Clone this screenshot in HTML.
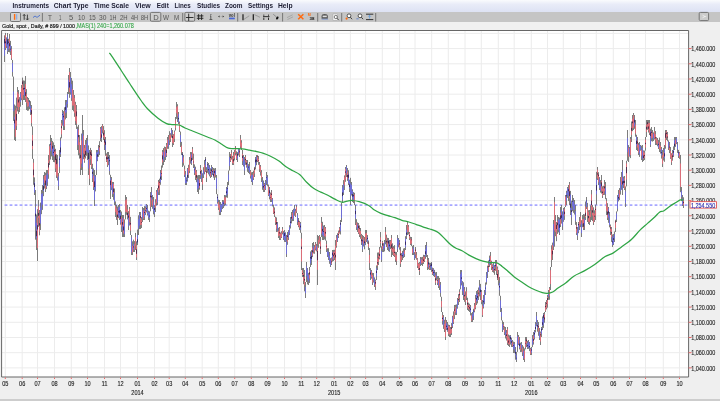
<!DOCTYPE html>
<html><head><meta charset="utf-8"><style>
*{margin:0;padding:0}
html,body{width:720px;height:401px;overflow:hidden;background:#efefef;font-family:"Liberation Sans",sans-serif}
#menu{position:absolute;left:0;top:0;width:720px;height:12px;background:linear-gradient(#fafbfd 0%,#e9ecf8 35%,#dde2f4 100%)}
#menu span{position:absolute;top:1px;font-size:8px;font-weight:bold;color:#1a1a2a;white-space:nowrap;line-height:10px}
#tool{position:absolute;left:0;top:12px;width:720px;height:10px;background:#c5c5c5}
#hdr{position:absolute;left:0;top:22px;width:720px;height:8px;background:#f0f0f0}
#hdr span{position:absolute;top:0;font-size:6.5px;line-height:8px;white-space:nowrap}
#bot{position:absolute;left:0;top:398.8px;width:720px;height:3px;background:#cdcdcd}
svg{position:absolute;left:0;top:0;will-change:transform}
.mn{font-size:8px;font-weight:bold;fill:#1c1c30}
.hd{font-size:6.2px;fill:#151515;stroke:#151515;stroke-width:0.18}
.tb{font-size:7.6px;fill:#555}
.yl{font-size:6.6px;fill:#222;stroke:#222;stroke-width:0.12}
.xl{font-size:6.6px;fill:#222;stroke:#222;stroke-width:0.12}
</style></head><body>
<div id="menu"></div>
<div id="tool"></div>
<div id="hdr"></div>
<div id="bot"></div>
<svg width="720" height="401" viewBox="0 0 720 401">
<text x="12.5" y="8.4" class="mn" textLength="36.5" lengthAdjust="spacingAndGlyphs">Instruments</text><text x="53.75" y="8.4" class="mn" textLength="34.75" lengthAdjust="spacingAndGlyphs">Chart Type</text><text x="93.75" y="8.4" class="mn" textLength="35.25" lengthAdjust="spacingAndGlyphs">Time Scale</text><text x="135" y="8.4" class="mn" textLength="15.75" lengthAdjust="spacingAndGlyphs">View</text><text x="156.75" y="8.4" class="mn" textLength="12" lengthAdjust="spacingAndGlyphs">Edit</text><text x="174.5" y="8.4" class="mn" textLength="16.25" lengthAdjust="spacingAndGlyphs">Lines</text><text x="197" y="8.4" class="mn" textLength="23" lengthAdjust="spacingAndGlyphs">Studies</text><text x="225" y="8.4" class="mn" textLength="17.5" lengthAdjust="spacingAndGlyphs">Zoom</text><text x="248" y="8.4" class="mn" textLength="25" lengthAdjust="spacingAndGlyphs">Settings</text><text x="278" y="8.4" class="mn" textLength="14.5" lengthAdjust="spacingAndGlyphs">Help</text><text x="2" y="27.9" class="hd" textLength="73" lengthAdjust="spacingAndGlyphs">Gold, spot , Daily, # 899 / 1000</text><text x="75.4" y="27.9" class="hd" style="fill:#30a444;stroke:#30a444;stroke-width:0.1;font-size:6.3px" textLength="58.4" lengthAdjust="spacingAndGlyphs">,MAS(1) 240=1,260.078</text><rect x="10.5" y="12.5" width="10" height="9" rx="1.2" fill="#d2d2d2" stroke="#6a6a6a" stroke-width="0.9"/><rect x="13.9" y="14" width="1.4" height="5.8" fill="#ff6a10"/><rect x="16" y="14.2" width="1.3" height="5.4" fill="#8ab0e8"/><path d="M24.2 19.8V14.6M23 15.8L24.2 14.4L25.4 15.8M27.4 14.6V19.8M26.2 18.6L27.4 20L28.6 18.6" stroke="#303030" stroke-width="0.9" fill="none"/><path d="M33 17.6L35 16L37 17.4L40 15.2" stroke="#4a70d0" stroke-width="0.9" fill="none"/><path d="M42.4 13V21.5" stroke="#6e6e6e" stroke-width="0.9"/><path d="M182.7 13V21.5" stroke="#6e6e6e" stroke-width="0.9"/><path d="M237.7 13V21.5" stroke="#6e6e6e" stroke-width="0.9"/><path d="M282.6 13V21.5" stroke="#6e6e6e" stroke-width="0.9"/><path d="M317.7 13V21.5" stroke="#6e6e6e" stroke-width="0.9"/><path d="M341.7 13V21.5" stroke="#6e6e6e" stroke-width="0.9"/><path d="M375.7 13V21.5" stroke="#6e6e6e" stroke-width="0.9"/><text x="47.9" y="19.8" class="tb" textLength="3.9" lengthAdjust="spacingAndGlyphs">T</text><text x="58.9" y="19.8" class="tb" textLength="2.4" lengthAdjust="spacingAndGlyphs">1</text><text x="69.0" y="19.8" class="tb" textLength="4.2" lengthAdjust="spacingAndGlyphs">5</text><text x="78.0" y="19.8" class="tb" textLength="7.0" lengthAdjust="spacingAndGlyphs">10</text><text x="88.9" y="19.8" class="tb" textLength="6.9" lengthAdjust="spacingAndGlyphs">15</text><text x="99.0" y="19.8" class="tb" textLength="7.4" lengthAdjust="spacingAndGlyphs">30</text><text x="109.4" y="19.8" class="tb" textLength="7.0" lengthAdjust="spacingAndGlyphs">1H</text><text x="119.9" y="19.8" class="tb" textLength="7.6" lengthAdjust="spacingAndGlyphs">2H</text><text x="131" y="19.8" class="tb" textLength="7.0" lengthAdjust="spacingAndGlyphs">4H</text><text x="140.7" y="19.8" class="tb" textLength="7.6" lengthAdjust="spacingAndGlyphs">8H</text><text x="163" y="19.8" class="tb" textLength="6.0" lengthAdjust="spacingAndGlyphs">W</text><text x="174" y="19.8" class="tb" textLength="5.2" lengthAdjust="spacingAndGlyphs">M</text><rect x="150.4" y="12.4" width="10.4" height="8.8" rx="1.2" fill="#cfcfcf" stroke="#6a6a6a" stroke-width="0.9"/><text x="153.3" y="19.8" class="tb">D</text><rect x="184.9" y="12.4" width="9.8" height="8.8" rx="1.2" fill="#cfcfcf" stroke="#6a6a6a" stroke-width="0.9"/><path d="M186 17.5H193.5M188.7 13.6V21" stroke="#202020" stroke-width="0.9"/><path d="M198.6 14.2V20M201.6 14.2V20M196.8 15.9H203.4M196.8 18.3H203.4" stroke="#202020" stroke-width="0.9"/><path d="M210.8 15.9V19.1M209.5 19.5H212.3M210 15.9H210.9" stroke="#404040" stroke-width="0.8"/><circle cx="210.9" cy="14.5" r="0.55" fill="#404040"/><path d="M218 16.6L219.6 15.6V17.6ZM224.2 16.6L222.6 15.6V17.6Z" fill="#333"/><circle cx="221.1" cy="16.6" r="0.4" fill="#777"/><text x="228.8" y="16.9" style="font-size:4.6px;fill:#333;font-weight:bold" textLength="6" lengthAdjust="spacingAndGlyphs">vol</text><rect x="229" y="17.6" width="5.8" height="1.7" fill="#4a68d8"/><path d="M243 14.2V20.2" stroke="#1a1a1a" stroke-width="1.2"/><path d="M244 19.3L249.2 15.8" stroke="#888" stroke-width="0.7"/><path d="M253.3 14.2V20.2" stroke="#1a1a1a" stroke-width="1.2"/><path d="M254.4 14.6L260 17.3" stroke="#888" stroke-width="0.7"/><path d="M263 16.6H269.5M263.8 14.6V15.8M268.5 14.6V15.8M263.8 17.6V20M268.5 17.6V20" stroke="#333" stroke-width="1"/><path d="M273.2 14.2L276.5 17" stroke="#777" stroke-width="0.7"/><ellipse cx="277.3" cy="18" rx="1.1" ry="1.6" fill="#111" transform="rotate(30 277.3 18)"/><path d="M287 17.6L292.6 14.8M287.4 19.6L293 16.8" stroke="#a0a0a0" stroke-width="0.8"/><path d="M298.2 14.2L303.4 19.2M303.4 14.2L298.2 19.2" stroke="#ff6a10" stroke-width="1.5"/><text x="307.8" y="16.2" style="font-size:3.6px;fill:#ff6a10;font-weight:bold">M</text><text x="309.6" y="20.2" style="font-size:4.4px;fill:#111;font-weight:bold">38</text><path d="M321.6 18.8V16.2Q321.6 14 324.6 14Q327.8 14 327.8 16.2V18.8Z" fill="#555"/><rect x="322.6" y="15.6" width="4.2" height="1.6" fill="#ddd"/><path d="M321.6 19.2H328" stroke="#6a8ad0" stroke-width="0.7"/><rect x="333" y="14" width="4.4" height="6.2" fill="#f4f4f4" stroke="#999" stroke-width="0.4"/><circle cx="335.8" cy="17" r="1.6" fill="#fff" stroke="#444" stroke-width="0.7"/><path d="M337 18.2L338.8 20.2" stroke="#333" stroke-width="0.8"/><circle cx="349" cy="15.8" r="1.9" fill="#fff" stroke="#333" stroke-width="0.8"/><path d="M350.3 17.2L352.1 19.2" stroke="#333" stroke-width="0.9"/><circle cx="346.6" cy="18.6" r="1.1" fill="#ff6a10"/><circle cx="360" cy="15.8" r="1.9" fill="#fff" stroke="#333" stroke-width="0.8"/><path d="M361.3 17.2L363.1 19.2" stroke="#333" stroke-width="0.9"/><path d="M356.4 18.8H358.6" stroke="#5a80d0" stroke-width="0.9"/><path d="M366 14.2H373.3M366 19.6H373.3" stroke="#333" stroke-width="1"/><path d="M369.6 15.4V18.6M368.4 16.6L369.6 15.3L370.8 16.6" stroke="#5a9ae0" stroke-width="0.8" fill="none"/><rect x="699.2" y="12.4" width="9.4" height="8.2" rx="1.2" fill="#cbcbcb" stroke="#6a6a6a" stroke-width="0.9"/><path d="M702.5 15.2L705 16.5L702.5 17.8" stroke="#f0f0f0" stroke-width="0.8" fill="none"/><path d="M704.2 16.5H706.2" stroke="#eee" stroke-width="0.8"/><rect x="1.6" y="30.5" width="687.0" height="346.5" fill="#fff"/><path d="M5.3 30.5V377.0M22.2 30.5V377.0M37.5 30.5V377.0M54.5 30.5V377.0M71.3 30.5V377.0M87.5 30.5V377.0M104.5 30.5V377.0M120.5 30.5V377.0M137.5 30.5V377.0M154.5 30.5V377.0M169.2 30.5V377.0M185.3 30.5V377.0M202.2 30.5V377.0M218.3 30.5V377.0M234.7 30.5V377.0M251.3 30.5V377.0M267.5 30.5V377.0M284.5 30.5V377.0M301.3 30.5V377.0M316.7 30.5V377.0M334.2 30.5V377.0M350.4 30.5V377.0M365.6 30.5V377.0M382.3 30.5V377.0M399.6 30.5V377.0M415.0 30.5V377.0M431.7 30.5V377.0M448.3 30.5V377.0M465.0 30.5V377.0M481.3 30.5V377.0M498.3 30.5V377.0M514.2 30.5V377.0M531.3 30.5V377.0M547.5 30.5V377.0M563.3 30.5V377.0M580.5 30.5V377.0M596.3 30.5V377.0M613.3 30.5V377.0M629.5 30.5V377.0M645.5 30.5V377.0M663.3 30.5V377.0M679.5 30.5V377.0M1.6 367.9H688.6M1.6 352.7H688.6M1.6 337.5H688.6M1.6 322.3H688.6M1.6 307.1H688.6M1.6 291.9H688.6M1.6 276.7H688.6M1.6 261.5H688.6M1.6 246.3H688.6M1.6 231.0H688.6M1.6 215.8H688.6M1.6 200.6H688.6M1.6 185.4H688.6M1.6 170.2H688.6M1.6 155.0H688.6M1.6 139.8H688.6M1.6 124.6H688.6M1.6 109.4H688.6M1.6 94.2H688.6M1.6 79.0H688.6M1.6 63.8H688.6M1.6 48.6H688.6M1.6 33.4H688.6" stroke="#ececec" stroke-width="1" fill="none"/><path d="M4.6 205.2H688.6" stroke="#a8a8ff" stroke-width="1.8" stroke-dasharray="2.8 2.2" fill="none"/><path d="M4.5 35.3V62.0M5.5 33.0V50.0M6.5 37.4V48.0M7.5 33.0V54.0M8.5 38.8V52.0M9.5 34.0V52.3M10.5 40.9V55.0M11.5 46.1V60.0M12.5 60.0V76.6M13.5 76.6V120.9M14.5 104.5V140.0M15.5 105.7V141.0M16.5 97.6V130.0M17.5 87.0V111.4M18.5 90.0V113.9M19.5 97.1V112.0M20.5 92.0V106.7M21.5 85.0V100.2M22.5 77.6V105.0M23.5 80.4V100.0M24.5 80.7V100.0M25.5 76.0V102.0M26.5 89.1V110.0M27.5 97.0V110.8M28.5 98.0V110.6M29.5 100.0V109.1M30.5 101.2V115.0M31.5 105.0V126.4M32.5 126.4V158.9M33.5 158.9V184.8M34.5 177.4V195.0M35.5 190.0V239.7M36.5 214.6V250.0M37.5 209.2V261.0M38.5 200.0V226.8M39.5 210.0V235.3M40.5 202.6V230.0M41.5 190.0V214.2M42.5 185.0V209.9M43.5 175.0V196.2M44.5 172.0V188.5M45.5 172.7V192.0M46.5 170.0V189.1M47.5 170.0V185.9M48.5 155.0V178.8M49.5 144.2V165.0M50.5 135.0V159.5M51.5 138.0V156.4M52.5 140.9V160.0M53.5 142.4V162.0M54.5 145.0V162.3M55.5 148.8V172.0M56.5 154.2V178.0M57.5 155.0V180.5M58.5 173.0V190.0M59.5 150.0V173.0M60.5 137.4V157.0M61.5 120.0V138.3M62.5 110.0V125.6M63.5 111.1V130.0M64.5 107.3V130.0M65.5 100.0V119.4M66.5 100.0V118.0M67.5 92.0V107.6M68.5 75.0V94.0M69.5 68.0V97.8M70.5 72.0V94.7M71.5 78.0V100.9M72.5 80.7V110.0M73.5 90.0V111.3M74.5 95.0V116.8M75.5 101.8V125.0M76.5 105.0V128.9M77.5 126.7V150.0M78.5 125.0V155.3M79.5 135.0V158.6M80.5 145.0V175.0M81.5 133.6V170.0M82.5 115.0V175.0M83.5 130.0V159.2M84.5 145.0V162.8M85.5 140.0V158.5M86.5 138.0V155.8M87.5 135.0V160.0M88.5 145.4V175.0M89.5 150.0V185.0M90.5 147.9V165.0M91.5 150.0V169.0M92.5 163.8V182.0M93.5 168.4V190.0M94.5 170.0V206.0M95.5 175.0V191.4M96.5 150.0V175.0M97.5 150.0V161.2M98.5 145.0V156.8M99.5 141.2V155.0M100.5 127.0V141.2M101.5 126.1V142.0M102.5 124.0V133.4M103.5 126.1V140.0M104.5 130.2V150.0M105.5 137.0V155.8M106.5 153.4V162.0M107.5 152.0V167.0M108.5 152.0V165.2M109.5 155.0V174.8M110.5 174.8V199.0M111.5 177.0V190.1M112.5 181.9V197.0M113.5 182.0V199.8M114.5 188.5V205.0M115.5 201.4V217.0M116.5 205.0V219.9M117.5 206.5V225.0M118.5 205.0V218.1M119.5 204.0V220.0M120.5 210.0V224.7M121.5 211.5V232.0M122.5 215.0V237.0M123.5 215.0V237.0M124.5 219.4V237.0M125.5 195.0V219.4M126.5 197.0V214.8M127.5 205.0V219.4M128.5 211.1V230.0M129.5 207.0V225.5M130.5 216.9V235.0M131.5 235.0V255.0M132.5 241.3V255.0M133.5 239.7V252.0M134.5 241.1V252.0M135.5 232.9V250.0M136.5 241.3V260.0M137.5 229.6V245.0M138.5 215.3V235.0M139.5 212.0V229.1M140.5 212.0V229.0M141.5 217.0V228.0M142.5 207.0V222.0M143.5 208.0V220.0M144.5 206.1V220.0M145.5 206.3V215.0M146.5 204.0V212.4M147.5 205.0V215.5M148.5 210.7V220.0M149.5 211.3V222.0M150.5 192.0V211.3M151.5 187.0V207.0M152.5 195.0V208.8M153.5 197.0V214.4M154.5 205.1V217.0M155.5 199.2V212.0M156.5 190.0V205.4M157.5 188.1V205.0M158.5 180.0V195.0M159.5 178.7V195.0M160.5 170.0V184.8M161.5 165.5V180.0M162.5 150.0V167.6M163.5 148.1V165.0M164.5 146.6V162.0M165.5 147.0V160.0M166.5 143.0V157.0M167.5 137.0V148.8M168.5 135.0V148.8M169.5 131.2V145.0M170.5 133.2V142.0M171.5 128.0V137.6M172.5 130.0V147.0M173.5 134.1V145.0M174.5 130.5V142.0M175.5 117.0V130.5M176.5 102.0V118.9M177.5 104.2V122.0M178.5 112.0V124.0M179.5 121.5V132.0M180.5 131.6V147.0M181.5 141.9V155.0M182.5 152.0V167.0M183.5 155.0V165.6M184.5 165.6V177.0M185.5 171.0V185.0M186.5 177.4V185.0M187.5 168.0V181.6M188.5 164.8V178.0M189.5 157.0V173.1M190.5 152.0V163.7M191.5 152.1V165.0M192.5 147.0V160.0M193.5 153.6V168.0M194.5 164.4V175.0M195.5 166.7V180.0M196.5 170.0V182.2M197.5 175.4V192.0M198.5 175.0V194.0M199.5 175.0V189.7M200.5 165.0V178.9M201.5 169.9V182.0M202.5 173.3V190.0M203.5 167.2V178.0M204.5 160.0V174.3M205.5 157.0V172.0M206.5 167.1V182.0M207.5 162.0V172.8M208.5 163.0V174.4M209.5 165.0V176.3M210.5 168.3V178.0M211.5 165.0V177.0M212.5 167.0V175.0M213.5 168.0V177.6M214.5 168.4V180.0M215.5 168.0V177.5M216.5 175.0V194.1M217.5 194.1V203.7M218.5 199.7V210.0M219.5 200.0V215.0M220.5 202.0V215.0M221.5 203.9V212.0M222.5 200.0V209.0M223.5 200.2V208.0M224.5 195.0V206.2M225.5 195.2V205.0M226.5 187.0V197.4M227.5 182.0V197.8M228.5 170.5V185.0M229.5 152.0V170.5M230.5 154.0V162.0M231.5 150.0V159.6M232.5 155.9V165.0M233.5 152.0V165.0M234.5 150.0V160.4M235.5 146.0V155.4M236.5 151.3V160.0M237.5 152.1V162.0M238.5 148.0V155.4M239.5 148.4V157.0M240.5 135.0V148.4M241.5 140.2V150.0M242.5 150.0V165.0M243.5 155.0V166.5M244.5 157.0V175.0M245.5 155.0V164.8M246.5 160.0V167.6M247.5 160.0V171.8M248.5 164.1V173.0M249.5 162.0V174.2M250.5 170.0V178.6M251.5 172.3V182.0M252.5 172.0V185.0M253.5 170.6V180.0M254.5 166.9V177.0M255.5 157.0V169.4M256.5 155.0V165.2M257.5 155.0V162.1M258.5 156.0V164.9M259.5 162.0V172.0M260.5 165.0V175.6M261.5 170.1V182.0M262.5 177.0V189.8M263.5 180.5V192.0M264.5 183.0V192.0M265.5 180.0V190.0M266.5 172.0V185.0M267.5 175.0V186.2M268.5 184.6V196.0M269.5 187.0V199.4M270.5 192.5V202.0M271.5 190.0V202.0M272.5 198.0V206.4M273.5 204.6V214.0M274.5 207.4V217.0M275.5 216.7V225.0M276.5 217.4V232.0M277.5 222.0V231.8M278.5 227.8V238.0M279.5 227.0V240.0M280.5 232.5V240.0M281.5 231.2V238.0M282.5 227.0V234.4M283.5 231.1V240.0M284.5 230.0V241.9M285.5 232.3V242.0M286.5 235.0V257.0M287.5 232.0V244.8M288.5 230.1V240.0M289.5 225.2V235.0M290.5 217.0V228.5M291.5 212.0V223.4M292.5 210.0V221.1M293.5 208.8V221.0M294.5 205.0V215.8M295.5 208.9V217.0M296.5 205.0V213.1M297.5 213.1V225.0M298.5 218.0V227.2M299.5 220.9V230.0M300.5 222.0V232.8M301.5 232.8V270.0M302.5 268.1V277.0M303.5 268.0V284.2M304.5 270.0V291.3M305.5 282.0V298.0M306.5 262.0V282.0M307.5 268.0V284.4M308.5 272.9V285.0M309.5 267.0V283.0M310.5 251.4V267.0M311.5 250.1V265.0M312.5 243.0V257.1M313.5 242.0V253.5M314.5 245.0V253.8M315.5 242.0V250.4M316.5 244.0V251.4M317.5 235.0V285.0M318.5 236.0V247.8M319.5 235.0V243.8M320.5 237.0V254.0M321.5 217.0V237.0M322.5 221.8V240.0M323.5 225.5V240.0M324.5 225.0V239.5M325.5 227.0V240.6M326.5 240.6V252.0M327.5 248.2V257.0M328.5 248.2V260.0M329.5 252.0V263.8M330.5 258.2V267.0M331.5 257.4V265.0M332.5 250.0V261.6M333.5 249.9V261.0M334.5 249.8V260.0M335.5 240.0V270.0M336.5 235.0V247.7M337.5 233.2V242.0M338.5 230.6V238.0M339.5 227.0V233.6M340.5 220.0V234.5M341.5 202.8V222.0M342.5 185.0V202.8M343.5 180.1V195.0M344.5 175.4V190.0M345.5 167.0V181.8M346.5 165.0V177.0M347.5 168.0V180.9M348.5 170.2V185.0M349.5 179.7V192.0M350.5 177.8V205.0M351.5 182.0V195.5M352.5 189.3V202.0M353.5 192.1V203.0M354.5 192.8V205.0M355.5 205.0V225.0M356.5 219.2V230.0M357.5 222.4V232.0M358.5 223.0V234.0M359.5 225.4V237.0M360.5 228.0V238.8M361.5 233.9V245.0M362.5 235.0V252.0M363.5 236.0V246.5M364.5 237.0V249.3M365.5 230.0V245.0M366.5 230.0V242.0M367.5 235.0V243.7M368.5 240.5V250.0M369.5 248.1V270.0M370.5 268.1V280.0M371.5 270.0V278.7M372.5 272.8V285.0M373.5 273.0V282.6M374.5 277.4V287.0M375.5 279.5V290.0M376.5 265.4V280.0M377.5 252.6V270.0M378.5 252.4V265.0M379.5 247.0V259.4M380.5 232.0V247.5M381.5 246.3V262.0M382.5 240.9V252.0M383.5 243.2V252.0M384.5 240.0V251.4M385.5 227.0V244.3M386.5 234.7V247.0M387.5 237.8V250.0M388.5 238.0V251.2M389.5 240.0V251.9M390.5 240.0V249.1M391.5 235.0V257.0M392.5 243.3V255.0M393.5 246.1V256.0M394.5 245.1V257.0M395.5 251.8V262.0M396.5 252.0V265.0M397.5 235.0V252.0M398.5 238.0V247.3M399.5 240.0V249.7M400.5 247.0V267.0M401.5 253.1V262.0M402.5 250.9V260.0M403.5 248.5V258.0M404.5 248.1V257.0M405.5 236.2V250.0M406.5 225.0V239.1M407.5 222.0V235.0M408.5 225.0V234.4M409.5 232.0V240.0M410.5 236.8V245.0M411.5 237.0V246.1M412.5 245.8V255.0M413.5 245.0V255.0M414.5 252.1V260.0M415.5 247.0V258.2M416.5 252.0V259.7M417.5 258.1V268.0M418.5 262.8V270.0M419.5 262.0V275.0M420.5 257.0V266.0M421.5 257.2V265.0M422.5 256.9V266.0M423.5 254.8V264.0M424.5 255.0V262.0M425.5 245.0V258.8M426.5 242.0V257.0M427.5 255.0V270.0M428.5 258.0V269.3M429.5 262.7V270.0M430.5 262.8V270.0M431.5 262.0V271.9M432.5 267.6V275.0M433.5 268.2V276.0M434.5 269.9V277.0M435.5 272.3V285.0M436.5 272.0V280.4M437.5 276.0V285.0M438.5 276.0V288.0M439.5 277.9V290.0M440.5 282.0V296.8M441.5 296.8V312.0M442.5 312.0V324.6M443.5 315.0V328.9M444.5 319.8V332.0M445.5 317.0V340.0M446.5 320.0V330.1M447.5 322.0V331.8M448.5 324.6V336.0M449.5 325.0V337.0M450.5 327.0V337.0M451.5 323.1V335.0M452.5 315.8V328.0M453.5 311.4V324.0M454.5 305.0V319.1M455.5 304.8V315.0M456.5 304.4V315.0M457.5 298.0V308.7M458.5 294.1V305.0M459.5 289.3V302.0M460.5 270.0V289.3M461.5 270.0V285.4M462.5 281.1V295.0M463.5 282.3V300.0M464.5 287.0V301.8M465.5 291.4V305.0M466.5 287.2V300.0M467.5 297.8V310.0M468.5 302.6V311.0M469.5 303.7V312.0M470.5 305.0V315.4M471.5 313.1V322.0M472.5 312.0V322.0M473.5 308.8V320.0M474.5 303.0V312.3M475.5 295.0V309.3M476.5 291.0V305.0M477.5 290.0V303.4M478.5 287.5V300.0M479.5 280.0V296.4M480.5 283.9V300.0M481.5 290.0V304.2M482.5 300.0V317.0M483.5 295.0V308.5M484.5 290.0V304.2M485.5 282.5V295.0M486.5 272.0V284.5M487.5 265.7V278.0M488.5 260.5V272.0M489.5 255.6V267.0M490.5 252.0V265.0M491.5 260.7V270.0M492.5 264.3V272.0M493.5 263.0V272.7M494.5 265.0V274.8M495.5 260.0V270.8M496.5 260.0V275.0M497.5 266.5V280.0M498.5 270.0V285.4M499.5 277.0V295.8M500.5 295.8V312.0M501.5 308.0V320.4M502.5 320.4V332.0M503.5 322.0V329.9M504.5 326.4V335.0M505.5 327.0V338.5M506.5 330.0V340.5M507.5 327.0V345.0M508.5 334.5V346.0M509.5 335.3V347.0M510.5 335.0V344.6M511.5 337.7V347.0M512.5 340.0V347.0M513.5 341.6V353.0M514.5 342.0V353.1M515.5 347.0V359.7M516.5 351.9V362.0M517.5 332.0V351.9M518.5 335.0V345.1M519.5 337.0V349.4M520.5 342.7V352.0M521.5 342.0V351.9M522.5 345.0V356.0M523.5 346.6V360.0M524.5 348.4V362.0M525.5 337.0V349.3M526.5 337.0V347.0M527.5 340.8V349.0M528.5 340.0V348.8M529.5 342.0V351.1M530.5 347.8V355.0M531.5 347.0V355.0M532.5 335.0V347.1M533.5 332.0V344.6M534.5 330.0V339.6M535.5 322.0V332.4M536.5 312.0V326.3M537.5 320.0V331.7M538.5 322.0V335.8M539.5 328.0V340.0M540.5 331.5V345.0M541.5 327.0V337.0M542.5 316.5V330.0M543.5 313.0V327.9M544.5 312.0V322.7M545.5 302.0V312.0M546.5 300.0V309.4M547.5 295.0V307.7M548.5 290.0V299.9M549.5 287.0V299.8M550.5 267.0V290.0M551.5 245.3V267.0M552.5 242.6V260.0M553.5 220.0V250.0M554.5 197.0V246.7M555.5 215.0V236.2M556.5 222.0V241.2M557.5 215.0V233.9M558.5 217.0V232.4M559.5 217.6V235.0M560.5 207.0V227.0M561.5 205.0V223.6M562.5 211.4V230.0M563.5 208.0V221.8M564.5 207.0V219.9M565.5 195.0V207.0M566.5 190.8V205.0M567.5 187.0V198.0M568.5 185.0V201.1M569.5 182.0V205.0M570.5 190.9V215.0M571.5 200.7V225.0M572.5 195.0V211.2M573.5 198.0V212.8M574.5 200.0V214.5M575.5 205.0V224.8M576.5 222.1V235.0M577.5 227.0V240.0M578.5 222.0V233.2M579.5 217.0V230.0M580.5 212.0V227.1M581.5 220.2V237.0M582.5 215.0V227.2M583.5 214.1V230.0M584.5 214.4V230.0M585.5 201.5V220.0M586.5 197.0V209.0M587.5 202.9V222.0M588.5 210.2V224.0M589.5 210.0V225.0M590.5 205.5V222.0M591.5 190.0V220.0M592.5 205.0V221.1M593.5 207.3V225.0M594.5 210.3V222.0M595.5 204.8V220.0M596.5 171.9V204.8M597.5 167.0V180.0M598.5 172.2V185.0M599.5 177.1V190.0M600.5 180.0V192.6M601.5 175.0V193.6M602.5 186.3V198.0M603.5 185.8V195.0M604.5 180.0V194.9M605.5 182.0V199.2M606.5 198.2V215.0M607.5 203.2V220.0M608.5 207.0V222.8M609.5 212.0V227.3M610.5 224.5V235.0M611.5 227.0V241.9M612.5 234.5V247.0M613.5 234.0V245.0M614.5 231.5V242.0M615.5 219.8V232.0M616.5 211.4V222.0M617.5 195.0V211.4M618.5 190.0V201.4M619.5 188.1V200.0M620.5 177.0V194.6M621.5 172.0V189.9M622.5 160.0V195.0M623.5 176.6V188.0M624.5 176.0V190.0M625.5 186.4V207.0M626.5 160.8V186.4M627.5 130.0V160.8M628.5 145.1V162.0M629.5 147.0V156.6M630.5 137.0V158.1M631.5 121.5V142.0M632.5 115.0V131.2M633.5 113.0V130.0M634.5 115.0V128.8M635.5 120.0V136.7M636.5 134.8V150.0M637.5 137.0V151.0M638.5 142.9V155.0M639.5 142.0V156.9M640.5 145.0V150.7M641.5 145.7V160.0M642.5 145.0V162.0M643.5 150.4V161.0M644.5 150.6V160.0M645.5 137.0V150.6M646.5 120.0V137.0M647.5 120.0V129.8M648.5 120.0V132.5M649.5 120.0V135.0M650.5 128.7V147.0M651.5 127.0V141.2M652.5 130.0V141.6M653.5 132.4V141.0M654.5 127.0V139.5M655.5 131.1V145.0M656.5 137.2V145.0M657.5 138.0V146.3M658.5 140.0V149.0M659.5 137.5V152.0M660.5 142.0V153.6M661.5 147.0V158.6M662.5 150.0V167.0M663.5 148.0V160.5M664.5 145.0V161.8M665.5 130.0V148.7M666.5 130.0V140.0M667.5 132.0V141.3M668.5 140.4V150.0M669.5 142.0V153.1M670.5 147.0V158.9M671.5 153.2V165.0M672.5 150.0V160.7M673.5 146.4V157.0M674.5 137.0V150.0M675.5 137.0V146.9M676.5 137.0V144.1M677.5 142.0V152.9M678.5 149.9V158.0M679.5 152.0V158.9M680.5 155.0V192.2M681.5 187.0V201.1M682.5 195.0V206.0M683.5 197.3V208.0" stroke="#6e6e6e" stroke-width="0.9" fill="none"/><path d="M5.5 35.0V47.9M9.5 38.5V48.4M11.5 49.2V58.5M15.5 110.2V136.9M16.5 107.9V126.1M17.5 92.0V106.8M18.5 93.8V110.1M19.5 100.7V107.0M21.5 88.0V98.3M22.5 81.4V99.9M23.5 86.6V95.0M25.5 84.0V98.4M26.5 93.9V102.8M27.5 99.0V106.8M28.5 101.8V106.2M31.5 108.3V123.1M32.5 135.0V149.2M33.5 162.7V177.1M37.5 217.5V248.2M38.5 206.6V218.1M39.5 215.3V231.6M44.5 176.0V183.0M45.5 175.0V188.9M48.5 160.4V174.4M49.5 146.3V161.2M51.5 141.8V150.4M54.5 149.1V156.5M55.5 151.4V168.5M56.5 158.6V175.5M57.5 163.5V177.2M61.5 123.2V134.4M64.5 111.3V126.4M69.5 72.0V92.1M72.5 89.0V105.6M73.5 94.7V105.5M74.5 98.0V113.2M75.5 104.4V121.1M76.5 110.5V123.7M78.5 129.6V145.1M79.5 142.2V153.2M80.5 154.7V168.4M81.5 140.4V163.5M83.5 135.6V153.4M84.5 148.0V160.8M85.5 144.2V155.8M89.5 159.2V178.9M90.5 150.5V159.4M91.5 152.8V166.7M93.5 175.8V187.2M99.5 145.8V151.4M100.5 128.7V137.9M102.5 125.5V130.2M103.5 129.8V137.1M104.5 134.3V144.6M106.5 154.7V160.7M107.5 157.2V165.0M111.5 179.9V187.5M113.5 184.1V193.9M115.5 205.9V211.9M116.5 208.3V214.8M117.5 210.6V218.9M121.5 216.8V226.5M123.5 218.6V233.5M125.5 200.3V211.9M126.5 199.3V212.2M127.5 209.6V216.4M129.5 208.9V222.1M130.5 222.3V230.7M132.5 245.9V252.6M134.5 244.4V249.8M135.5 237.0V245.5M136.5 245.5V257.4M140.5 215.4V225.1M141.5 219.6V224.8M143.5 210.5V218.7M145.5 208.1V213.0M150.5 195.2V206.9M152.5 199.4V205.5M155.5 202.5V207.6M156.5 191.7V203.3M158.5 181.9V192.2M159.5 180.9V189.6M161.5 170.3V175.9M162.5 152.0V162.4M164.5 148.3V157.0M166.5 145.2V155.5M167.5 139.8V146.3M169.5 135.1V140.4M170.5 134.6V139.1M172.5 134.8V142.9M173.5 135.3V143.6M174.5 131.8V138.9M175.5 120.3V127.9M176.5 107.3V113.3M177.5 106.1V116.4M179.5 123.2V130.2M181.5 145.7V152.5M183.5 157.4V163.2M184.5 169.1V175.1M188.5 167.6V174.9M189.5 159.9V170.9M190.5 154.4V160.2M192.5 149.1V157.6M193.5 158.5V163.9M195.5 169.4V176.1M196.5 171.6V179.1M199.5 178.8V187.9M200.5 168.0V175.3M202.5 178.2V184.4M204.5 164.8V172.2M206.5 170.1V177.9M210.5 171.3V176.4M212.5 169.7V172.5M214.5 170.2V176.6M218.5 202.0V207.7M219.5 204.7V211.7M224.5 197.3V203.6M225.5 197.4V203.4M230.5 156.3V161.0M231.5 152.9V156.8M232.5 157.5V163.1M233.5 155.1V163.6M234.5 152.0V157.8M235.5 147.2V153.0M236.5 154.2V158.9M239.5 151.3V154.6M240.5 138.8V146.5M241.5 142.6V147.9M242.5 153.9V161.1M245.5 157.0V161.7M246.5 160.8V166.3M250.5 171.4V176.1M253.5 173.2V178.2M254.5 168.0V173.5M257.5 155.8V161.0M258.5 159.0V162.0M259.5 164.4V169.4M260.5 166.5V172.0M261.5 172.4V178.1M264.5 184.2V190.0M268.5 186.4V194.7M270.5 194.2V198.9M271.5 192.6V199.9M273.5 207.8V213.0M274.5 210.4V214.8M275.5 217.9V222.6M276.5 221.0V228.7M278.5 230.9V236.1M279.5 228.4V235.7M280.5 233.6V238.6M281.5 232.8V237.1M282.5 229.1V233.0M287.5 234.9V241.9M292.5 212.9V219.0M295.5 211.1V215.6M296.5 206.9V211.4M298.5 220.1V225.9M299.5 222.0V227.8M301.5 238.6V261.5M302.5 270.2V275.0M303.5 273.1V280.8M304.5 277.2V285.2M309.5 270.4V278.5M312.5 247.6V255.6M314.5 247.2V252.2M315.5 243.6V248.7M317.5 246.6V269.8M318.5 239.8V244.6M319.5 236.2V242.3M320.5 241.4V249.7M321.5 222.9V233.5M324.5 227.1V236.2M325.5 228.4V236.7M326.5 244.3V249.2M331.5 258.5V263.6M333.5 251.8V259.2M334.5 251.5V256.8M335.5 245.6V261.6M336.5 237.7V246.0M338.5 232.3V236.3M339.5 228.3V232.8M344.5 177.3V185.2M345.5 169.1V179.6M347.5 171.5V178.5M354.5 194.4V201.6M356.5 222.5V227.4M358.5 224.7V232.7M359.5 227.9V234.8M360.5 231.0V235.1M361.5 235.5V242.4M363.5 237.5V243.8M365.5 233.6V242.1M366.5 232.9V238.9M368.5 242.5V246.7M369.5 254.9V263.1M371.5 271.5V276.9M372.5 275.0V282.4M375.5 281.5V286.6M377.5 258.2V265.9M378.5 255.2V262.0M379.5 249.5V257.9M380.5 237.4V243.1M382.5 242.0V249.2M385.5 231.9V238.5M386.5 237.6V243.3M387.5 241.5V247.0M390.5 241.3V246.3M391.5 238.1V250.2M392.5 247.1V252.1M393.5 247.9V255.0M394.5 249.2V255.7M395.5 254.3V259.6M396.5 255.1V261.2M399.5 242.3V247.8M400.5 250.8V263.8M401.5 255.0V259.9M404.5 250.1V254.1M407.5 223.9V232.0M408.5 226.7V231.7M409.5 232.9V238.4M410.5 238.6V244.2M411.5 239.3V243.6M412.5 248.6V253.1M415.5 249.6V254.5M416.5 254.7V258.5M417.5 259.2V265.8M418.5 263.8V269.0M419.5 263.4V271.2M421.5 259.2V263.4M422.5 259.9V262.9M423.5 256.7V262.5M424.5 256.7V261.0M427.5 259.8V267.1M429.5 264.8V269.1M432.5 269.3V274.0M435.5 275.3V282.6M437.5 279.1V283.2M439.5 279.5V286.3M441.5 301.1V307.2M442.5 315.3V321.0M444.5 323.8V329.3M445.5 320.6V336.9M448.5 326.0V333.8M449.5 326.5V334.6M450.5 329.2V334.0M451.5 325.8V333.1M453.5 315.3V322.4M454.5 309.2V315.5M455.5 306.8V312.3M458.5 297.6V301.8M459.5 292.1V297.9M464.5 289.7V298.4M465.5 295.7V301.8M466.5 291.3V296.2M467.5 300.6V307.6M468.5 305.4V309.0M469.5 305.1V309.5M471.5 315.3V320.7M474.5 305.5V310.8M475.5 298.9V307.7M478.5 290.2V296.5M481.5 291.9V301.9M482.5 305.6V315.2M488.5 264.2V270.5M490.5 256.1V262.1M491.5 263.5V267.7M492.5 265.5V271.2M494.5 267.5V271.4M496.5 262.4V270.7M497.5 268.6V277.9M498.5 274.5V280.4M503.5 324.7V327.5M504.5 328.3V332.2M506.5 332.8V337.3M507.5 328.9V342.7M508.5 336.6V344.2M509.5 338.5V344.5M512.5 342.2V346.0M518.5 336.8V343.7M520.5 344.9V350.1M522.5 347.7V352.6M524.5 350.8V359.3M525.5 341.1V347.4M526.5 339.0V343.6M530.5 349.0V354.2M533.5 335.8V342.2M538.5 325.5V331.6M540.5 332.9V341.5M544.5 314.4V320.1M545.5 305.5V310.8M546.5 301.8V308.1M547.5 296.9V304.2M549.5 288.3V295.7M550.5 270.2V284.1M551.5 249.4V259.9M552.5 245.0V254.9M554.5 202.2V230.4M555.5 221.0V232.0M556.5 224.9V236.5M557.5 221.1V229.5M560.5 212.6V224.7M564.5 209.1V215.6M565.5 196.7V205.7M569.5 184.3V198.4M576.5 225.7V232.9M579.5 220.8V226.2M580.5 216.6V224.4M582.5 219.0V223.9M583.5 219.3V228.4M585.5 206.6V217.2M587.5 207.1V215.4M588.5 211.9V221.6M589.5 215.0V222.2M590.5 210.7V217.0M591.5 194.4V210.2M592.5 207.0V215.5M593.5 212.9V222.7M594.5 213.7V220.1M595.5 207.7V215.6M597.5 169.7V178.3M598.5 174.2V182.3M601.5 180.9V190.7M602.5 188.8V195.9M603.5 187.2V194.1M604.5 184.2V191.4M606.5 200.9V210.8M607.5 206.7V217.7M610.5 226.1V231.4M611.5 229.1V237.3M615.5 221.2V228.0M619.5 190.0V197.7M621.5 176.8V185.0M624.5 178.3V188.5M626.5 163.5V179.5M628.5 147.8V156.8M630.5 139.1V155.1M631.5 127.2V134.9M632.5 118.7V128.3M633.5 115.4V127.9M635.5 124.6V133.5M637.5 140.7V147.6M638.5 144.9V152.5M641.5 149.9V155.6M643.5 151.6V158.6M644.5 152.7V157.8M645.5 139.7V147.6M646.5 124.7V132.0M647.5 122.1V127.2M648.5 123.2V130.3M649.5 123.0V133.1M651.5 131.1V138.3M652.5 133.3V137.8M654.5 131.2V137.9M655.5 134.1V140.2M656.5 138.4V143.4M657.5 140.4V144.2M659.5 142.2V149.1M660.5 145.8V150.1M662.5 155.2V163.8M663.5 152.2V156.9M665.5 133.0V146.4M666.5 131.2V137.1M667.5 134.4V138.3M669.5 145.6V150.2M670.5 150.9V157.6M671.5 154.7V162.3M672.5 153.1V157.5M675.5 140.2V144.5M679.5 152.7V157.6M680.5 163.5V186.8M683.5 200.5V205.1" stroke="#ec6c78" stroke-width="0.85" fill="none"/><path d="M4.5 38.4V55.7M6.5 40.0V45.9M7.5 36.6V51.1M8.5 41.3V48.9M10.5 45.4V51.0M12.5 63.0V72.0M13.5 91.5V111.2M14.5 116.8V129.1M20.5 93.7V101.9M24.5 87.4V95.8M29.5 101.4V107.0M30.5 105.9V112.1M34.5 182.4V192.5M35.5 207.2V226.6M36.5 222.8V238.2M40.5 207.6V223.7M41.5 193.9V210.1M42.5 193.2V204.7M43.5 179.5V191.2M46.5 175.1V186.5M47.5 173.2V182.4M50.5 142.3V151.1M52.5 145.5V154.7M53.5 147.5V156.1M58.5 176.3V186.1M59.5 156.4V167.0M60.5 140.6V154.2M62.5 112.5V120.3M63.5 114.0V125.7M65.5 105.4V113.2M66.5 102.0V112.4M67.5 94.1V104.0M68.5 79.7V87.8M70.5 77.1V92.4M71.5 84.1V98.3M77.5 129.1V145.0M82.5 133.6V167.2M86.5 144.0V151.6M87.5 140.3V152.8M88.5 149.3V168.6M92.5 169.0V178.3M94.5 175.5V200.0M95.5 176.7V189.6M96.5 152.5V170.1M97.5 151.8V159.7M98.5 148.4V154.2M101.5 127.8V139.2M105.5 140.3V150.0M108.5 156.6V160.8M109.5 158.9V171.0M110.5 178.0V190.7M112.5 183.5V193.9M114.5 192.7V202.3M118.5 207.4V215.7M119.5 206.6V218.1M120.5 212.4V222.9M122.5 217.9V230.2M124.5 223.4V234.2M128.5 214.0V226.4M131.5 237.5V252.2M133.5 244.0V249.7M137.5 234.9V242.7M138.5 219.2V228.6M139.5 214.7V225.7M142.5 209.7V218.9M144.5 210.2V217.0M146.5 205.0V210.5M147.5 208.2V214.0M148.5 212.0V217.2M149.5 212.8V218.5M151.5 192.4V200.5M153.5 201.5V211.0M154.5 207.3V213.5M157.5 190.3V202.3M160.5 173.0V182.3M163.5 151.9V160.6M165.5 150.7V157.2M168.5 139.7V146.7M171.5 130.1V134.6M178.5 114.1V122.5M180.5 135.1V142.2M182.5 153.8V162.4M185.5 174.1V183.2M186.5 179.6V183.0M187.5 169.4V179.6M191.5 154.1V163.1M194.5 167.4V172.8M197.5 178.8V189.4M198.5 180.2V188.1M201.5 172.3V179.3M203.5 170.2V175.5M205.5 159.0V166.8M207.5 163.7V169.5M208.5 165.5V171.6M209.5 167.5V174.4M211.5 167.1V175.1M213.5 170.5V176.6M215.5 170.4V174.7M216.5 177.9V188.9M217.5 196.4V202.1M220.5 204.5V212.3M221.5 204.8V210.0M222.5 202.1V207.0M223.5 201.6V205.5M226.5 188.9V195.6M227.5 187.1V194.1M228.5 174.4V180.7M229.5 157.1V165.9M237.5 153.7V159.2M238.5 148.9V153.5M243.5 157.0V165.1M244.5 160.3V170.5M247.5 163.6V168.1M248.5 166.5V170.1M249.5 166.1V172.3M251.5 175.1V180.5M252.5 175.0V182.2M255.5 159.3V166.5M256.5 156.7V162.2M262.5 180.6V186.5M263.5 184.4V188.9M265.5 181.5V188.9M266.5 176.1V180.8M267.5 177.4V184.1M269.5 189.1V196.9M272.5 199.0V205.0M277.5 223.5V230.7M283.5 233.1V238.0M284.5 231.9V240.2M285.5 233.7V241.0M286.5 241.1V254.2M288.5 231.5V237.6M289.5 227.1V233.0M290.5 220.4V226.3M291.5 215.5V219.8M293.5 210.1V219.4M294.5 208.3V212.3M297.5 214.7V222.1M300.5 223.6V229.8M305.5 287.0V293.1M306.5 266.4V276.1M307.5 269.7V279.6M308.5 275.4V281.4M310.5 256.3V263.5M311.5 251.9V260.1M313.5 246.0V250.9M316.5 245.6V249.8M322.5 226.3V235.1M323.5 230.6V236.5M327.5 251.2V255.2M328.5 251.9V257.9M329.5 256.0V261.2M330.5 259.5V265.4M332.5 252.3V259.3M337.5 234.9V240.6M340.5 222.8V231.2M341.5 206.0V218.1M342.5 187.4V199.8M343.5 184.2V192.6M346.5 166.7V173.3M348.5 173.9V183.3M349.5 181.2V188.6M350.5 183.4V195.9M351.5 184.9V194.0M352.5 191.0V198.3M353.5 195.0V200.4M355.5 209.2V218.3M357.5 224.5V229.2M362.5 239.5V249.2M364.5 240.8V245.8M367.5 237.0V241.8M370.5 270.8V277.6M373.5 276.3V280.2M374.5 279.1V284.7M376.5 268.2V276.4M381.5 250.9V259.9M383.5 246.0V249.9M384.5 242.1V248.1M388.5 240.3V247.6M389.5 244.0V250.7M397.5 238.2V249.1M398.5 239.6V244.6M402.5 253.1V257.0M403.5 251.8V256.2M405.5 238.3V247.2M406.5 229.8V235.6M413.5 247.5V253.2M414.5 254.4V258.6M420.5 258.9V264.3M425.5 249.2V256.4M426.5 245.7V253.8M428.5 262.0V267.4M430.5 265.1V267.5M431.5 263.6V269.8M433.5 269.2V274.5M434.5 271.9V275.8M436.5 274.9V277.7M438.5 280.0V286.0M440.5 284.7V292.9M443.5 317.5V325.3M446.5 323.1V328.5M447.5 325.1V330.7M452.5 317.2V326.2M456.5 307.9V313.4M457.5 299.9V307.4M460.5 273.9V287.2M461.5 272.0V283.0M462.5 282.7V291.2M463.5 285.9V295.6M470.5 307.2V312.1M472.5 314.2V319.3M473.5 310.3V316.3M476.5 293.6V301.6M477.5 294.6V300.7M479.5 285.7V290.9M480.5 287.5V294.6M483.5 298.6V306.9M484.5 292.5V302.5M485.5 285.6V292.3M486.5 274.3V282.1M487.5 267.9V274.2M489.5 258.2V264.8M493.5 264.5V270.3M495.5 262.3V267.2M499.5 282.9V290.2M500.5 300.4V309.8M501.5 311.8V316.7M502.5 324.1V330.0M505.5 330.4V335.4M510.5 336.1V341.7M511.5 340.0V344.0M513.5 344.1V349.6M514.5 344.2V349.4M515.5 349.7V355.4M516.5 355.2V359.7M517.5 336.2V346.2M519.5 340.0V348.0M521.5 343.9V348.5M523.5 350.9V358.1M527.5 343.2V347.5M528.5 341.5V347.1M529.5 343.5V348.5M531.5 348.6V352.6M532.5 338.6V344.7M534.5 331.3V337.8M535.5 324.1V329.9M536.5 316.1V323.1M537.5 323.1V327.9M539.5 331.6V337.7M541.5 328.1V333.9M542.5 318.6V326.0M543.5 314.6V324.5M548.5 293.3V296.6M553.5 224.0V246.2M558.5 219.3V229.9M559.5 219.9V232.4M561.5 210.1V219.5M562.5 214.4V226.3M563.5 209.5V220.1M566.5 192.9V200.7M567.5 188.1V194.6M568.5 189.0V196.3M570.5 194.6V210.0M571.5 208.3V217.4M572.5 200.6V206.5M573.5 201.2V209.8M574.5 204.3V209.7M575.5 211.2V220.7M577.5 230.4V235.7M578.5 223.9V231.4M581.5 222.6V233.1M584.5 218.6V225.5M586.5 200.3V206.9M596.5 179.0V194.3M599.5 178.6V188.0M600.5 184.0V191.0M605.5 187.8V194.3M608.5 208.6V217.5M609.5 215.9V225.0M612.5 236.2V245.0M613.5 237.6V243.7M614.5 234.3V238.7M616.5 213.5V219.5M617.5 197.1V208.7M618.5 193.9V199.7M620.5 181.5V190.8M622.5 170.4V189.5M623.5 178.4V184.8M625.5 191.4V203.1M627.5 138.0V152.3M629.5 148.4V155.6M634.5 118.9V126.3M636.5 136.7V146.2M639.5 144.3V154.3M640.5 145.9V149.7M642.5 148.0V159.0M650.5 131.2V144.7M653.5 133.9V139.1M658.5 142.7V147.5M661.5 148.9V155.5M664.5 149.0V158.2M668.5 141.6V147.6M673.5 149.9V155.4M674.5 139.9V146.5M676.5 138.1V143.4M677.5 144.5V149.3M678.5 151.6V156.0M681.5 190.9V197.0M682.5 198.7V204.8" stroke="#6c6ce6" stroke-width="0.85" fill="none"/><path d="M4.5 39.0V43.4M5.5 41.4V43.2M7.5 39.3V44.3M8.5 41.6V42.8M9.5 43.2V46.3M10.5 48.7V49.5M14.5 119.7V123.4M16.5 113.9V120.5M18.5 99.5V102.5M22.5 81.4V84.1M23.5 87.9V89.6M24.5 87.9V89.0M25.5 92.2V95.9M29.5 101.5V102.1M31.5 110.1V114.4M32.5 140.6V145.9M33.5 169.6V175.3M34.5 183.3V187.0M35.5 213.6V216.3M36.5 230.8V236.2M37.5 225.2V229.5M38.5 212.9V215.8M39.5 223.1V225.6M43.5 186.1V189.8M45.5 180.6V185.3M48.5 163.1V167.5M50.5 143.7V144.7M52.5 145.8V148.7M53.5 151.9V153.0M54.5 149.7V151.6M55.5 154.5V160.1M56.5 158.8V164.2M59.5 158.6V159.8M60.5 147.5V152.4M61.5 126.2V128.2M62.5 114.2V114.9M63.5 115.8V117.3M65.5 106.9V110.0M69.5 82.1V87.5M76.5 111.4V116.3M78.5 135.0V137.2M80.5 154.8V158.1M84.5 154.4V156.8M85.5 150.8V155.1M88.5 152.8V159.0M90.5 151.7V155.0M91.5 153.6V156.0M92.5 171.9V173.9M94.5 181.4V187.1M97.5 154.3V156.7M99.5 146.2V147.2M101.5 134.4V137.7M103.5 132.8V135.5M104.5 139.2V142.6M105.5 141.6V144.8M106.5 157.1V159.4M107.5 157.4V159.1M108.5 157.1V158.7M109.5 160.1V161.3M110.5 180.7V185.1M113.5 188.5V192.1M117.5 214.6V217.2M118.5 211.3V212.3M119.5 210.4V212.7M120.5 215.6V218.9M122.5 222.1V224.7M123.5 226.5V230.5M127.5 212.7V215.3M128.5 215.5V217.7M130.5 222.8V224.6M133.5 246.5V247.4M136.5 249.3V253.8M137.5 239.3V242.4M140.5 216.1V217.8M141.5 222.2V222.9M144.5 212.1V213.0M145.5 210.0V210.6M146.5 208.1V208.9M149.5 215.6V216.4M150.5 195.5V197.3M151.5 196.2V197.3M154.5 208.0V210.0M158.5 185.5V188.3M159.5 181.7V182.8M160.5 176.6V179.1M161.5 173.3V174.0M162.5 155.4V159.4M166.5 149.8V153.0M172.5 135.8V138.1M178.5 117.9V119.3M182.5 153.8V155.2M186.5 180.5V181.2M187.5 174.9V177.5M191.5 157.9V161.1M193.5 161.6V162.4M194.5 169.5V170.2M196.5 175.0V177.7M199.5 183.0V185.9M200.5 171.0V173.7M205.5 159.2V160.7M206.5 171.4V172.7M207.5 164.4V165.2M208.5 169.0V170.3M210.5 172.1V173.2M211.5 169.4V171.2M212.5 171.1V172.1M213.5 174.0V175.8M214.5 170.8V173.2M217.5 196.9V198.3M223.5 202.7V203.7M226.5 191.3V193.2M227.5 188.3V189.1M230.5 156.4V158.0M233.5 159.2V161.5M235.5 147.7V148.3M237.5 153.8V155.7M239.5 151.3V152.3M242.5 155.6V158.0M245.5 158.9V160.2M246.5 162.7V164.6M248.5 166.7V167.6M254.5 168.3V169.9M255.5 159.5V162.3M256.5 159.8V161.7M257.5 156.0V156.6M258.5 160.1V160.7M263.5 186.0V187.5M264.5 185.0V185.8M266.5 177.4V178.0M269.5 190.3V193.1M270.5 197.0V197.5M271.5 193.5V195.0M274.5 211.5V213.2M276.5 222.0V224.2M279.5 232.2V233.5M284.5 233.1V236.0M287.5 235.4V237.0M290.5 221.6V222.9M291.5 216.8V218.5M298.5 220.6V221.7M300.5 225.6V227.4M301.5 246.6V249.0M302.5 273.1V274.0M303.5 274.9V276.7M304.5 278.8V280.5M309.5 272.3V274.5M310.5 257.1V258.5M311.5 256.1V258.9M312.5 250.3V252.3M317.5 251.0V260.2M320.5 246.4V248.8M322.5 228.9V231.3M323.5 231.0V231.9M325.5 231.9V233.6M326.5 245.7V246.7M331.5 261.4V262.4M332.5 252.8V255.2M333.5 254.7V256.3M334.5 252.9V254.8M335.5 254.8V257.4M338.5 234.1V235.0M339.5 230.6V231.5M340.5 223.1V224.7M342.5 192.4V196.1M345.5 171.5V172.7M347.5 175.0V177.3M348.5 174.6V177.7M349.5 184.5V187.1M352.5 194.1V196.6M353.5 195.1V196.3M355.5 210.9V214.2M358.5 225.7V228.1M359.5 228.2V228.9M361.5 239.3V241.3M362.5 240.3V241.3M364.5 241.4V243.1M367.5 237.8V239.1M368.5 242.6V243.6M370.5 272.6V274.6M375.5 282.1V283.6M376.5 270.8V273.0M377.5 262.2V263.5M378.5 257.5V258.4M379.5 253.8V256.1M380.5 240.2V241.5M382.5 243.3V245.6M386.5 240.8V242.5M387.5 241.6V242.3M388.5 240.9V243.6M389.5 244.6V246.3M391.5 244.4V247.8M392.5 247.6V248.6M394.5 251.8V253.0M399.5 243.4V244.5M400.5 253.5V255.4M401.5 255.5V256.1M402.5 255.2V256.3M404.5 250.7V251.1M405.5 241.6V244.8M406.5 232.6V234.7M409.5 235.0V236.1M411.5 239.6V240.2M415.5 249.6V250.8M419.5 268.0V269.9M423.5 259.4V261.1M425.5 251.3V254.0M428.5 262.3V264.4M429.5 266.6V267.1M430.5 265.4V266.2M431.5 263.6V266.1M432.5 269.8V271.2M433.5 272.1V273.2M434.5 272.5V273.0M435.5 278.3V280.5M437.5 280.1V280.7M442.5 317.7V319.0M446.5 325.7V327.0M447.5 327.9V329.8M451.5 327.3V328.9M454.5 309.4V310.8M458.5 299.1V300.1M459.5 293.8V295.3M461.5 277.4V278.8M464.5 294.9V296.4M467.5 302.7V304.6M468.5 306.1V307.0M469.5 307.0V308.5M470.5 308.5V309.9M473.5 310.7V311.4M476.5 298.0V299.6M477.5 296.0V297.8M478.5 292.7V293.6M480.5 289.6V292.1M483.5 300.8V302.3M485.5 287.7V288.5M488.5 266.2V267.1M489.5 259.8V260.9M492.5 267.3V268.3M494.5 268.9V270.1M495.5 265.1V266.2M497.5 274.0V277.8M499.5 286.0V287.5M503.5 326.1V326.6M506.5 334.4V336.0M508.5 340.5V342.7M510.5 337.0V339.2M511.5 341.2V342.7M513.5 345.2V345.9M515.5 351.9V353.6M516.5 357.8V358.4M519.5 343.6V346.0M525.5 342.8V343.6M526.5 339.5V341.3M527.5 345.2V346.2M529.5 346.0V347.3M531.5 349.4V350.5M533.5 339.1V340.8M534.5 332.9V334.5M535.5 327.0V329.0M537.5 325.1V326.6M538.5 326.2V327.3M540.5 334.3V335.3M541.5 328.9V330.6M542.5 322.3V324.8M543.5 315.0V317.8M544.5 317.4V319.6M545.5 305.9V307.2M546.5 302.8V303.8M547.5 298.1V300.0M552.5 250.8V254.5M556.5 225.0V229.0M557.5 222.7V225.2M559.5 224.3V227.9M560.5 215.5V219.2M561.5 215.2V217.9M564.5 211.7V214.2M566.5 195.3V196.3M568.5 189.2V191.2M569.5 191.3V196.2M570.5 203.6V207.7M571.5 210.3V212.0M572.5 200.9V201.7M576.5 227.2V228.6M578.5 224.0V225.3M583.5 223.2V226.8M585.5 212.7V215.8M586.5 200.6V201.3M588.5 215.9V218.2M591.5 200.7V205.0M592.5 210.3V212.6M594.5 215.7V216.6M595.5 208.7V210.0M596.5 185.1V190.5M597.5 173.4V174.5M598.5 174.5V176.2M601.5 182.4V186.2M602.5 191.6V193.1M604.5 186.4V188.4M607.5 211.7V214.7M608.5 211.2V213.4M610.5 227.4V228.5M611.5 232.1V233.6M612.5 241.3V242.5M613.5 238.2V239.9M615.5 221.3V222.5M618.5 197.0V198.6M622.5 181.3V184.4M623.5 180.9V183.0M624.5 180.8V183.1M626.5 167.0V173.2M631.5 127.7V130.7M632.5 121.5V123.2M634.5 119.7V122.5M636.5 140.7V144.0M637.5 141.5V143.4M643.5 155.5V158.0M644.5 154.9V156.2M645.5 142.8V144.2M646.5 126.7V129.4M647.5 122.2V124.2M648.5 126.4V128.8M650.5 132.5V136.0M651.5 131.7V132.9M655.5 137.2V138.4M658.5 143.8V144.8M661.5 152.2V153.2M664.5 153.3V156.4M665.5 133.2V137.8M666.5 132.8V134.1M667.5 136.5V137.7M669.5 146.6V147.5M672.5 155.4V157.2M673.5 151.0V152.7M674.5 143.7V146.4M678.5 152.3V153.3M683.5 201.8V203.1" stroke="#221438" stroke-width="0.9" fill="none" opacity="0.8"/><path d="M109.40 52.80C110.27 54.05 112.93 57.82 114.60 60.30C116.27 62.78 117.80 65.22 119.40 67.70C121.00 70.18 122.48 72.57 124.20 75.20C125.92 77.83 127.87 80.72 129.70 83.50C131.53 86.28 133.25 88.98 135.20 91.90C137.15 94.82 139.35 98.20 141.40 101.00C143.45 103.80 144.73 105.83 147.50 108.70C150.27 111.57 154.82 115.72 158.00 118.20C161.18 120.68 164.27 122.53 166.60 123.60C168.93 124.67 169.93 124.37 172.00 124.60C174.07 124.83 176.83 124.43 179.00 125.00C181.17 125.57 182.75 127.00 185.00 128.00C187.25 129.00 190.00 130.00 192.50 131.00C195.00 132.00 197.52 133.00 200.00 134.00C202.48 135.00 204.92 136.00 207.40 137.00C209.88 138.00 212.65 138.88 214.90 140.00C217.15 141.12 218.65 142.33 220.90 143.70C223.15 145.07 226.15 147.38 228.40 148.20C230.65 149.02 232.15 148.48 234.40 148.60C236.65 148.72 239.42 148.65 241.90 148.90C244.38 149.15 246.82 149.65 249.30 150.10C251.78 150.55 254.55 151.10 256.80 151.60C259.05 152.10 260.60 152.37 262.80 153.10C265.00 153.83 267.30 154.68 270.00 156.00C272.70 157.32 276.33 159.20 279.00 161.00C281.67 162.80 283.68 165.17 286.00 166.80C288.32 168.43 290.58 169.48 292.90 170.80C295.22 172.12 297.57 172.75 299.90 174.70C302.23 176.65 304.57 180.18 306.90 182.50C309.23 184.82 311.58 187.00 313.90 188.60C316.22 190.20 318.48 190.98 320.80 192.10C323.12 193.22 325.47 194.13 327.80 195.30C330.13 196.47 332.47 197.95 334.80 199.10C337.13 200.25 339.77 201.85 341.80 202.20C343.83 202.55 345.25 201.48 347.00 201.20C348.75 200.92 350.27 200.42 352.30 200.50C354.33 200.58 356.47 200.87 359.20 201.70C361.93 202.53 366.23 204.15 368.70 205.50C371.17 206.85 371.97 208.50 374.00 209.80C376.03 211.10 378.58 212.33 380.90 213.30C383.22 214.27 385.57 214.87 387.90 215.60C390.23 216.33 392.57 216.92 394.90 217.70C397.23 218.48 399.57 219.58 401.90 220.30C404.23 221.02 406.58 221.33 408.90 222.00C411.22 222.67 413.48 223.50 415.80 224.30C418.12 225.10 420.47 226.02 422.80 226.80C425.13 227.58 427.47 228.20 429.80 229.00C432.13 229.80 435.05 230.72 436.80 231.60C438.55 232.48 438.85 232.98 440.30 234.30C441.75 235.62 443.75 237.77 445.50 239.50C447.25 241.23 449.05 243.25 450.80 244.70C452.55 246.15 454.13 247.20 456.00 248.20C457.87 249.20 459.83 249.55 462.00 250.70C464.17 251.85 466.67 253.78 469.00 255.10C471.33 256.42 473.68 257.58 476.00 258.60C478.32 259.62 480.58 260.53 482.90 261.20C485.22 261.87 487.57 262.32 489.90 262.60C492.23 262.88 494.87 262.27 496.90 262.90C498.93 263.53 500.35 265.08 502.10 266.40C503.85 267.72 505.37 269.05 507.40 270.80C509.43 272.55 511.98 275.07 514.30 276.90C516.62 278.73 518.97 280.20 521.30 281.80C523.63 283.40 525.97 285.13 528.30 286.50C530.63 287.87 532.97 288.98 535.30 290.00C537.63 291.02 540.27 292.05 542.30 292.60C544.33 293.15 545.77 293.40 547.50 293.30C549.23 293.20 550.95 292.88 552.70 292.00C554.45 291.12 555.78 289.55 558.00 288.00C560.22 286.45 563.37 284.67 566.00 282.70C568.63 280.73 570.75 278.17 573.80 276.20C576.85 274.23 580.82 272.87 584.30 270.90C587.78 268.93 591.22 266.80 594.70 264.40C598.18 262.00 602.15 258.38 605.20 256.50C608.25 254.62 610.38 254.62 613.00 253.10C615.62 251.58 617.83 249.67 620.90 247.40C623.97 245.13 628.22 242.38 631.40 239.50C634.58 236.62 637.32 232.78 640.00 230.10C642.68 227.42 645.00 225.63 647.50 223.40C650.00 221.17 653.00 218.57 655.00 216.70C657.00 214.83 658.00 213.20 659.50 212.20C661.00 211.20 662.25 211.70 664.00 210.70C665.75 209.70 668.00 207.57 670.00 206.20C672.00 204.83 674.27 203.55 676.00 202.50C677.73 201.45 679.17 200.28 680.40 199.90C681.63 199.52 682.90 200.15 683.40 200.20" stroke="#2fa545" stroke-width="1.25" fill="none" stroke-linejoin="round"/><path d="M1.6 377.0V30.5H688.6V377.0H1.6" stroke="#676767" stroke-width="1" fill="none"/><path d="M688.6 367.9H691.6" stroke="#e86a6a" stroke-width="1"/><text x="691.2" y="370.6" class="yl" textLength="24.2" lengthAdjust="spacingAndGlyphs">1,040.000</text><path d="M688.6 352.7H691.6" stroke="#e86a6a" stroke-width="1"/><text x="691.2" y="355.4" class="yl" textLength="24.2" lengthAdjust="spacingAndGlyphs">1,060.000</text><path d="M688.6 337.5H691.6" stroke="#e86a6a" stroke-width="1"/><text x="691.2" y="340.2" class="yl" textLength="24.2" lengthAdjust="spacingAndGlyphs">1,080.000</text><path d="M688.6 322.3H691.6" stroke="#e86a6a" stroke-width="1"/><text x="691.2" y="325.0" class="yl" textLength="24.2" lengthAdjust="spacingAndGlyphs">1,100.000</text><path d="M688.6 307.1H691.6" stroke="#e86a6a" stroke-width="1"/><text x="691.2" y="309.8" class="yl" textLength="24.2" lengthAdjust="spacingAndGlyphs">1,120.000</text><path d="M688.6 291.9H691.6" stroke="#e86a6a" stroke-width="1"/><text x="691.2" y="294.6" class="yl" textLength="24.2" lengthAdjust="spacingAndGlyphs">1,140.000</text><path d="M688.6 276.7H691.6" stroke="#e86a6a" stroke-width="1"/><text x="691.2" y="279.4" class="yl" textLength="24.2" lengthAdjust="spacingAndGlyphs">1,160.000</text><path d="M688.6 261.5H691.6" stroke="#e86a6a" stroke-width="1"/><text x="691.2" y="264.2" class="yl" textLength="24.2" lengthAdjust="spacingAndGlyphs">1,180.000</text><path d="M688.6 246.3H691.6" stroke="#e86a6a" stroke-width="1"/><text x="691.2" y="249.0" class="yl" textLength="24.2" lengthAdjust="spacingAndGlyphs">1,200.000</text><path d="M688.6 231.0H691.6" stroke="#e86a6a" stroke-width="1"/><text x="691.2" y="233.7" class="yl" textLength="24.2" lengthAdjust="spacingAndGlyphs">1,220.000</text><path d="M688.6 215.8H691.6" stroke="#e86a6a" stroke-width="1"/><text x="691.2" y="218.5" class="yl" textLength="24.2" lengthAdjust="spacingAndGlyphs">1,240.000</text><path d="M688.6 200.6H691.6" stroke="#e86a6a" stroke-width="1"/><text x="691.2" y="203.3" class="yl" textLength="24.2" lengthAdjust="spacingAndGlyphs">1,260.000</text><path d="M688.6 185.4H691.6" stroke="#e86a6a" stroke-width="1"/><text x="691.2" y="188.1" class="yl" textLength="24.2" lengthAdjust="spacingAndGlyphs">1,280.000</text><path d="M688.6 170.2H691.6" stroke="#e86a6a" stroke-width="1"/><text x="691.2" y="172.9" class="yl" textLength="24.2" lengthAdjust="spacingAndGlyphs">1,300.000</text><path d="M688.6 155.0H691.6" stroke="#e86a6a" stroke-width="1"/><text x="691.2" y="157.7" class="yl" textLength="24.2" lengthAdjust="spacingAndGlyphs">1,320.000</text><path d="M688.6 139.8H691.6" stroke="#e86a6a" stroke-width="1"/><text x="691.2" y="142.5" class="yl" textLength="24.2" lengthAdjust="spacingAndGlyphs">1,340.000</text><path d="M688.6 124.6H691.6" stroke="#e86a6a" stroke-width="1"/><text x="691.2" y="127.3" class="yl" textLength="24.2" lengthAdjust="spacingAndGlyphs">1,360.000</text><path d="M688.6 109.4H691.6" stroke="#e86a6a" stroke-width="1"/><text x="691.2" y="112.1" class="yl" textLength="24.2" lengthAdjust="spacingAndGlyphs">1,380.000</text><path d="M688.6 94.2H691.6" stroke="#e86a6a" stroke-width="1"/><text x="691.2" y="96.9" class="yl" textLength="24.2" lengthAdjust="spacingAndGlyphs">1,400.000</text><path d="M688.6 79.0H691.6" stroke="#e86a6a" stroke-width="1"/><text x="691.2" y="81.7" class="yl" textLength="24.2" lengthAdjust="spacingAndGlyphs">1,420.000</text><path d="M688.6 63.8H691.6" stroke="#e86a6a" stroke-width="1"/><text x="691.2" y="66.5" class="yl" textLength="24.2" lengthAdjust="spacingAndGlyphs">1,440.000</text><path d="M688.6 48.6H691.6" stroke="#e86a6a" stroke-width="1"/><text x="691.2" y="51.3" class="yl" textLength="24.2" lengthAdjust="spacingAndGlyphs">1,460.000</text><path d="M5.3 377.5V379.0" stroke="#e86a6a" stroke-width="1"/><text x="2.2" y="385.9" class="xl" textLength="6.2" lengthAdjust="spacingAndGlyphs">05</text><path d="M22.2 377.5V379.0" stroke="#e86a6a" stroke-width="1"/><text x="19.1" y="385.9" class="xl" textLength="6.2" lengthAdjust="spacingAndGlyphs">06</text><path d="M37.5 377.5V379.0" stroke="#e86a6a" stroke-width="1"/><text x="34.4" y="385.9" class="xl" textLength="6.2" lengthAdjust="spacingAndGlyphs">07</text><path d="M54.5 377.5V379.0" stroke="#e86a6a" stroke-width="1"/><text x="51.4" y="385.9" class="xl" textLength="6.2" lengthAdjust="spacingAndGlyphs">08</text><path d="M71.3 377.5V379.0" stroke="#e86a6a" stroke-width="1"/><text x="68.2" y="385.9" class="xl" textLength="6.2" lengthAdjust="spacingAndGlyphs">09</text><path d="M87.5 377.5V379.0" stroke="#e86a6a" stroke-width="1"/><text x="84.4" y="385.9" class="xl" textLength="6.2" lengthAdjust="spacingAndGlyphs">10</text><path d="M104.5 377.5V379.0" stroke="#e86a6a" stroke-width="1"/><text x="101.4" y="385.9" class="xl" textLength="6.2" lengthAdjust="spacingAndGlyphs">11</text><path d="M120.5 377.5V379.0" stroke="#e86a6a" stroke-width="1"/><text x="117.4" y="385.9" class="xl" textLength="6.2" lengthAdjust="spacingAndGlyphs">12</text><path d="M137.5 377.5V379.0" stroke="#e86a6a" stroke-width="1"/><text x="134.4" y="385.9" class="xl" textLength="6.2" lengthAdjust="spacingAndGlyphs">01</text><path d="M154.5 377.5V379.0" stroke="#e86a6a" stroke-width="1"/><text x="151.4" y="385.9" class="xl" textLength="6.2" lengthAdjust="spacingAndGlyphs">02</text><path d="M169.2 377.5V379.0" stroke="#e86a6a" stroke-width="1"/><text x="166.1" y="385.9" class="xl" textLength="6.2" lengthAdjust="spacingAndGlyphs">03</text><path d="M185.3 377.5V379.0" stroke="#e86a6a" stroke-width="1"/><text x="182.2" y="385.9" class="xl" textLength="6.2" lengthAdjust="spacingAndGlyphs">04</text><path d="M202.2 377.5V379.0" stroke="#e86a6a" stroke-width="1"/><text x="199.1" y="385.9" class="xl" textLength="6.2" lengthAdjust="spacingAndGlyphs">05</text><path d="M218.3 377.5V379.0" stroke="#e86a6a" stroke-width="1"/><text x="215.2" y="385.9" class="xl" textLength="6.2" lengthAdjust="spacingAndGlyphs">06</text><path d="M234.7 377.5V379.0" stroke="#e86a6a" stroke-width="1"/><text x="231.6" y="385.9" class="xl" textLength="6.2" lengthAdjust="spacingAndGlyphs">07</text><path d="M251.3 377.5V379.0" stroke="#e86a6a" stroke-width="1"/><text x="248.2" y="385.9" class="xl" textLength="6.2" lengthAdjust="spacingAndGlyphs">08</text><path d="M267.5 377.5V379.0" stroke="#e86a6a" stroke-width="1"/><text x="264.4" y="385.9" class="xl" textLength="6.2" lengthAdjust="spacingAndGlyphs">09</text><path d="M284.5 377.5V379.0" stroke="#e86a6a" stroke-width="1"/><text x="281.4" y="385.9" class="xl" textLength="6.2" lengthAdjust="spacingAndGlyphs">10</text><path d="M301.3 377.5V379.0" stroke="#e86a6a" stroke-width="1"/><text x="298.2" y="385.9" class="xl" textLength="6.2" lengthAdjust="spacingAndGlyphs">11</text><path d="M316.7 377.5V379.0" stroke="#e86a6a" stroke-width="1"/><text x="313.6" y="385.9" class="xl" textLength="6.2" lengthAdjust="spacingAndGlyphs">12</text><path d="M334.2 377.5V379.0" stroke="#e86a6a" stroke-width="1"/><text x="331.1" y="385.9" class="xl" textLength="6.2" lengthAdjust="spacingAndGlyphs">01</text><path d="M350.4 377.5V379.0" stroke="#e86a6a" stroke-width="1"/><text x="347.3" y="385.9" class="xl" textLength="6.2" lengthAdjust="spacingAndGlyphs">02</text><path d="M365.6 377.5V379.0" stroke="#e86a6a" stroke-width="1"/><text x="362.5" y="385.9" class="xl" textLength="6.2" lengthAdjust="spacingAndGlyphs">03</text><path d="M382.3 377.5V379.0" stroke="#e86a6a" stroke-width="1"/><text x="379.2" y="385.9" class="xl" textLength="6.2" lengthAdjust="spacingAndGlyphs">04</text><path d="M399.6 377.5V379.0" stroke="#e86a6a" stroke-width="1"/><text x="396.5" y="385.9" class="xl" textLength="6.2" lengthAdjust="spacingAndGlyphs">05</text><path d="M415.0 377.5V379.0" stroke="#e86a6a" stroke-width="1"/><text x="411.9" y="385.9" class="xl" textLength="6.2" lengthAdjust="spacingAndGlyphs">06</text><path d="M431.7 377.5V379.0" stroke="#e86a6a" stroke-width="1"/><text x="428.6" y="385.9" class="xl" textLength="6.2" lengthAdjust="spacingAndGlyphs">07</text><path d="M448.3 377.5V379.0" stroke="#e86a6a" stroke-width="1"/><text x="445.2" y="385.9" class="xl" textLength="6.2" lengthAdjust="spacingAndGlyphs">08</text><path d="M465.0 377.5V379.0" stroke="#e86a6a" stroke-width="1"/><text x="461.9" y="385.9" class="xl" textLength="6.2" lengthAdjust="spacingAndGlyphs">09</text><path d="M481.3 377.5V379.0" stroke="#e86a6a" stroke-width="1"/><text x="478.2" y="385.9" class="xl" textLength="6.2" lengthAdjust="spacingAndGlyphs">10</text><path d="M498.3 377.5V379.0" stroke="#e86a6a" stroke-width="1"/><text x="495.2" y="385.9" class="xl" textLength="6.2" lengthAdjust="spacingAndGlyphs">11</text><path d="M514.2 377.5V379.0" stroke="#e86a6a" stroke-width="1"/><text x="511.1" y="385.9" class="xl" textLength="6.2" lengthAdjust="spacingAndGlyphs">12</text><path d="M531.3 377.5V379.0" stroke="#e86a6a" stroke-width="1"/><text x="528.2" y="385.9" class="xl" textLength="6.2" lengthAdjust="spacingAndGlyphs">01</text><path d="M547.5 377.5V379.0" stroke="#e86a6a" stroke-width="1"/><text x="544.4" y="385.9" class="xl" textLength="6.2" lengthAdjust="spacingAndGlyphs">02</text><path d="M563.3 377.5V379.0" stroke="#e86a6a" stroke-width="1"/><text x="560.2" y="385.9" class="xl" textLength="6.2" lengthAdjust="spacingAndGlyphs">03</text><path d="M580.5 377.5V379.0" stroke="#e86a6a" stroke-width="1"/><text x="577.4" y="385.9" class="xl" textLength="6.2" lengthAdjust="spacingAndGlyphs">04</text><path d="M596.3 377.5V379.0" stroke="#e86a6a" stroke-width="1"/><text x="593.2" y="385.9" class="xl" textLength="6.2" lengthAdjust="spacingAndGlyphs">05</text><path d="M613.3 377.5V379.0" stroke="#e86a6a" stroke-width="1"/><text x="610.2" y="385.9" class="xl" textLength="6.2" lengthAdjust="spacingAndGlyphs">06</text><path d="M629.5 377.5V379.0" stroke="#e86a6a" stroke-width="1"/><text x="626.4" y="385.9" class="xl" textLength="6.2" lengthAdjust="spacingAndGlyphs">07</text><path d="M645.5 377.5V379.0" stroke="#e86a6a" stroke-width="1"/><text x="642.4" y="385.9" class="xl" textLength="6.2" lengthAdjust="spacingAndGlyphs">08</text><path d="M663.3 377.5V379.0" stroke="#e86a6a" stroke-width="1"/><text x="660.2" y="385.9" class="xl" textLength="6.2" lengthAdjust="spacingAndGlyphs">09</text><path d="M679.5 377.5V379.0" stroke="#e86a6a" stroke-width="1"/><text x="676.4" y="385.9" class="xl" textLength="6.2" lengthAdjust="spacingAndGlyphs">10</text><text x="131.3" y="394.8" class="xl" textLength="12.4" lengthAdjust="spacingAndGlyphs">2014</text><text x="328.0" y="394.8" class="xl" textLength="12.4" lengthAdjust="spacingAndGlyphs">2015</text><text x="525.1" y="394.8" class="xl" textLength="12.4" lengthAdjust="spacingAndGlyphs">2016</text><rect x="690" y="201.7" width="26.6" height="6.4" fill="#fff" stroke="#e04040" stroke-width="0.8"/><text x="691" y="207.5" class="yl" style="fill:#3030e0" textLength="24.2" lengthAdjust="spacingAndGlyphs">1,254.550</text>
</svg>
</body></html>
